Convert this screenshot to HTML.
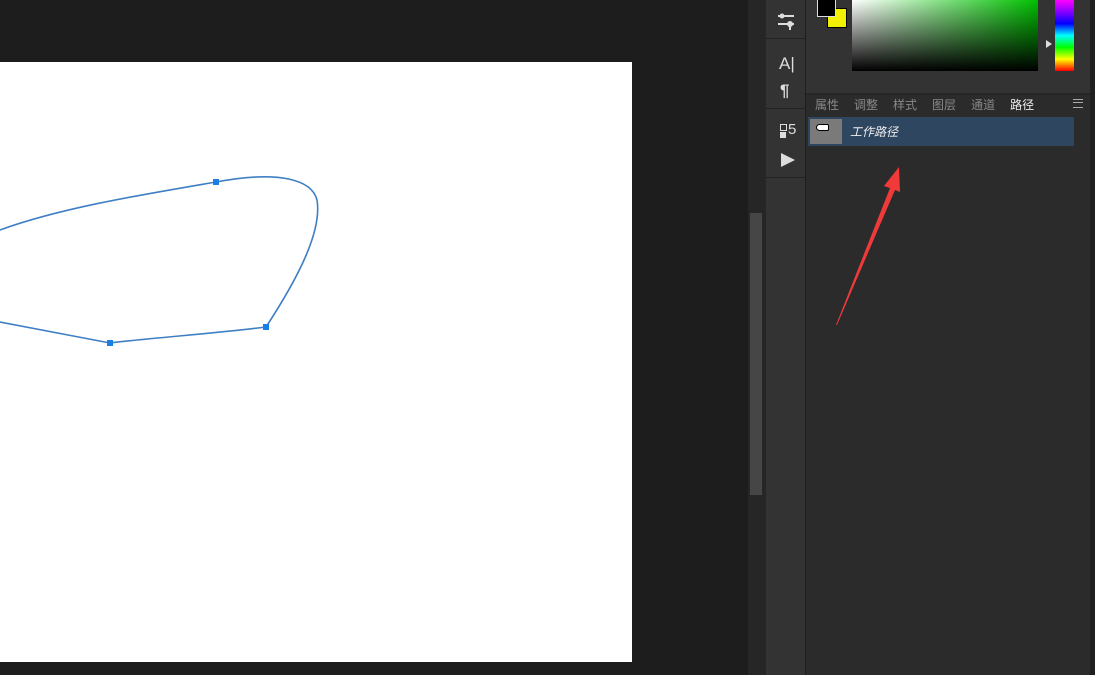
<!DOCTYPE html>
<html><head><meta charset="utf-8"><style>
body{margin:0;width:1095px;height:675px;overflow:hidden;background:#1d1d1d;position:relative;font-family:"Liberation Sans","Noto Sans CJK SC",sans-serif}
.a{position:absolute}
</style></head><body>
<div class="a" style="left:0;top:62px;width:632px;height:600px;background:#fff"></div>
<svg class="a" style="left:0;top:0" width="640" height="675">
<path d="M0,230 C60,208 140,195 216,182 C280,170 312,180 317,200 C322,230 300,275 266,327 C210,334 160,337 110,343 L0,322" fill="none" stroke="#3f7fc4" stroke-width="1.6"/>
<rect x="213" y="179" width="6" height="6" fill="#1a7ee8"/>
<rect x="263" y="324" width="6" height="6" fill="#1a7ee8"/>
<rect x="107" y="340" width="6" height="6" fill="#1a7ee8"/>
</svg>
<div class="a" style="left:748px;top:0;width:18px;height:675px;background:#262626"></div>
<div class="a" style="left:750px;top:213px;width:12px;height:282px;background:#464646"></div>
<div class="a" style="left:766px;top:0;width:39px;height:675px;background:#333"></div>
<div class="a" style="left:766px;top:38px;width:39px;height:1px;background:#222"></div>
<div class="a" style="left:766px;top:108px;width:39px;height:1px;background:#222"></div>
<div class="a" style="left:766px;top:177px;width:39px;height:1px;background:#222"></div>
<div class="a" style="left:805px;top:0;width:1px;height:675px;background:#1e1e1e"></div>
<div class="a" style="left:806px;top:0;width:284px;height:675px;background:#2b2b2b"></div>
<div class="a" style="left:1090px;top:0;width:5px;height:675px;background:#1f1f1f"></div>
<div class="a" style="left:806px;top:0;width:284px;height:93px;background:#333"></div>
<div class="a" style="left:806px;top:93px;width:284px;height:2px;background:#262626"></div>
<!-- toolbar icons -->
<svg class="a" style="left:776px;top:12px" width="22" height="20">
<rect x="2" y="3" width="16" height="2" fill="#ddd"/><circle cx="6" cy="4" r="2.5" fill="#ddd"/>
<rect x="2" y="11" width="16" height="2" fill="#ddd"/><circle cx="14" cy="12" r="3" fill="#ddd"/><rect x="13" y="12" width="2" height="6" fill="#ddd"/>
</svg>
<div class="a" style="left:779px;top:54px;color:#ddd;font-size:17px">A<span style="font-weight:100">|</span></div>
<div class="a" style="left:780px;top:81px;color:#ddd;font-size:17px;font-weight:bold">¶</div>
<div class="a" style="left:780px;top:124px;width:5px;height:5px;border:1px solid #ddd"></div>
<div class="a" style="left:780px;top:132px;width:6px;height:6px;background:#ddd"></div>
<div class="a" style="left:788px;top:121px;color:#ddd;font-size:15px">5</div>
<div class="a" style="left:781px;top:153px;width:0;height:0;border-left:14px solid #ddd;border-top:7px solid transparent;border-bottom:7px solid transparent"></div>
<!-- swatches -->
<div class="a" style="left:827px;top:8px;width:18px;height:18px;background:#f0f000;border:1px solid #000"></div>
<div class="a" style="left:817px;top:-2px;width:17px;height:17px;background:#000;border:1px solid #ddd"></div>
<div class="a" style="left:852px;top:0;width:186px;height:71px;background:linear-gradient(to bottom,transparent,#000),linear-gradient(to right,#fff,#00c000)"></div>
<div class="a" style="left:1055px;top:0;width:19px;height:71px;background:linear-gradient(to bottom,#f0f,#80f,#00f,#0ff,#0f0,#ff0,#f00)"></div>
<div class="a" style="left:1046px;top:40px;width:0;height:0;border-left:6px solid #ddd;border-top:4px solid transparent;border-bottom:4px solid transparent"></div>
<!-- tabs -->
<div class="a" style="left:1002px;top:95px;width:38px;height:18px;background:#2b2b2b"></div>
<div class="a" style="left:815px;top:96px;font-size:12px;color:#888;white-space:nowrap">
<span style="margin-right:15px">属性</span><span style="margin-right:15px">调整</span><span style="margin-right:15px">样式</span><span style="margin-right:15px">图层</span><span style="margin-right:15px">通道</span><span style="color:#eee">路径</span></div>
<div class="a" style="left:1073px;top:99px;width:10px;height:7px;border-top:1px solid #aaa;border-bottom:1px solid #aaa"></div>
<div class="a" style="left:1073px;top:102px;width:10px;height:1px;background:#aaa"></div>
<!-- path row -->
<div class="a" style="left:808px;top:117px;width:266px;height:29px;background:#2f4660"></div>
<div class="a" style="left:810px;top:119px;width:32px;height:25px;background:#7a7a7a"></div>
<div class="a" style="left:816px;top:124px;width:11px;height:5px;background:#fff;border:1px solid #000;border-radius:4px 2px 2px 4px"></div>
<div class="a" style="left:850px;top:123px;font-size:12px;color:#eee;font-style:italic">工作路径</div>
<!-- arrow -->
<svg class="a" style="left:830px;top:160px" width="80" height="170">
<path d="M6,165 L60,28 L54,26 L69,7 L70,32 L65,30 L7,165Z" fill="#f03a3a"/>
</svg>
</body></html>
